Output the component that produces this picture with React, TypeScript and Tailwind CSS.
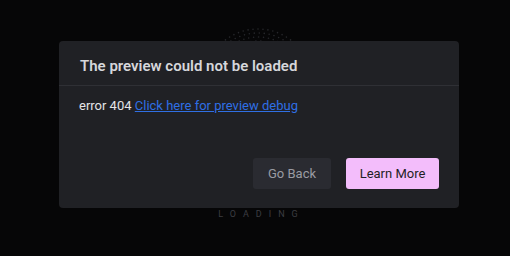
import React from 'react'

// halftone ring spinner that sits behind the dialog
function DotSpinner() {
  const dots: { x: number; y: number }[] = []
  const rings = [54, 50, 46, 42, 38, 34]
  rings.forEach((radius, i) => {
    const count = Math.round((2 * Math.PI * radius) / 5)
    for (let k = 0; k < count; k++) {
      const a = (k / count) * Math.PI * 2 + i * 0.25
      dots.push({ x: 56 + radius * Math.cos(a), y: 56 + radius * Math.sin(a) })
    }
  })
  return (
    <svg width="112" height="112" viewBox="0 0 112 112" className="block">
      {dots.map((d, i) => (
        <circle key={i} cx={d.x} cy={d.y} r={0.8} fill="#26272b" />
      ))}
    </svg>
  )
}

export default function App() {
  return (
    <div
      className="relative w-full h-[256px] bg-[#060607] overflow-hidden"
      style={{ fontFamily: 'Roboto, "Liberation Sans", sans-serif' }}
    >
      <div className="flex flex-col items-center pt-[27px] pl-[6px]">
        <DotSpinner />
        <div className="mt-[69px] text-[9px] leading-[12px] tracking-[7px] text-[#3c3d42] pl-[7px]">
          LOADING
        </div>
      </div>

      <div className="absolute left-[59px] top-[41px] w-[400px] h-[167px] rounded-[4px] bg-[#202125] flex flex-col">
        <div className="h-[45px] px-[21px] flex items-center border-b border-[#2f3035]">
          <h2 className="text-[15px] font-semibold text-[#d6d7db] pt-[7px]">
            The preview could not be loaded
          </h2>
        </div>
        <div className="px-[20px] pt-[11px] text-[13px] text-[#e4e4e7] leading-[18px]">
          error 404{' '}
          <a href="#" className="text-[#2f6fe4] underline">
            Click here for preview debug
          </a>
        </div>
        <div className="mt-auto flex justify-end gap-[15px] px-[20px] pb-[19px]">
          <button className="w-[78px] h-[31px] rounded-[3px] bg-[#2a2b31] text-[13px] text-[#9a9ca3]">
            Go Back
          </button>
          <button className="w-[93px] h-[31px] rounded-[3px] bg-[#f3bdfb] text-[13px] text-[#1f1f24]">
            Learn More
          </button>
        </div>
      </div>
    </div>
  )
}
